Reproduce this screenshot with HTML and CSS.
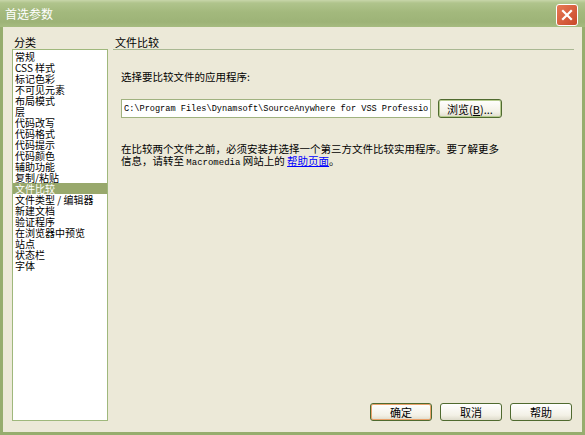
FILE: index.html
```html
<!DOCTYPE html>
<html lang="zh-CN">
<head>
    <meta charset="UTF-8">
    <title>首选参数</title>
    <link rel="stylesheet" href="styles.css">
</head>
<body>
    <div class="window">
        <div class="titlebar">
            <span class="title">首选参数</span>
            <button class="close" aria-label="关闭">
                <svg width="12" height="12" viewBox="0 0 12 12"><path d="M2 2 L10 10 M10 2 L2 10" stroke="#fff" stroke-width="2.2" stroke-linecap="square"/></svg>
            </button>
        </div>
        <div class="content">
            <div class="category">
                <div class="label">分类</div>
                <ul class="list">
                    <li>常规</li>
                    <li>CSS 样式</li>
                    <li>标记色彩</li>
                    <li>不可见元素</li>
                    <li>布局模式</li>
                    <li>层</li>
                    <li>代码改写</li>
                    <li>代码格式</li>
                    <li>代码提示</li>
                    <li>代码颜色</li>
                    <li>辅助功能</li>
                    <li>复制/粘贴</li>
                    <li class="selected">文件比较</li>
                    <li>文件类型 / 编辑器</li>
                    <li>新建文档</li>
                    <li>验证程序</li>
                    <li>在浏览器中预览</li>
                    <li>站点</li>
                    <li>状态栏</li>
                    <li>字体</li>
                </ul>
            </div>
            <div class="panel">
                <div class="panel-title">文件比较</div>
                <div class="panel-body">
                    <p class="prompt">选择要比较文件的应用程序:</p>
                    <div class="path-row">
                        <input class="path" type="text" value="C:\Program Files\Dynamsoft\SourceAnywhere for VSS Professional\SAWCompare.exe">
                        <button class="btn browse">浏览(<u>B</u>)...</button>
                    </div>
                    <p class="note">在比较两个文件之前，必须安装并选择一个第三方文件比较实用程序。要了解更多<br>信息，请转至 <span class="mono">Macromedia</span> 网站上的 <a href="#">帮助页面</a>。</p>
                </div>
                <div class="actions">
                    <button class="btn default">确定</button>
                    <button class="btn">取消</button>
                    <button class="btn">帮助</button>
                </div>
            </div>
        </div>
    </div>
</body>
</html>
```

FILE: styles.css
```css
body {
    margin: 0;
    padding: 0;
    font-family: "Noto Sans CJK SC", "DejaVu Sans", sans-serif;
    font-size: 11px;
    color: #000;
}
.window {
    width: 585px;
    height: 435px;
    display: flex;
    flex-direction: column;
    background: #96ad6e;
}
.titlebar {
    height: 27px;
    display: flex;
    align-items: center;
    justify-content: space-between;
    padding: 0 7px 0 5px;
    background: linear-gradient(#c8d6aa 0, #b0c48c 3px, #a3b97d 12px, #9db377 22px, #a6bb80 27px);
    box-sizing: border-box;
}
.title {
    color: #fff;
    font-size: 12px;
    line-height: 12px;
}
.close {
    width: 22px;
    height: 22px;
    padding: 0;
    margin-top: 2px;
    border: 1px solid #fff;
    border-radius: 3px;
    background: linear-gradient(135deg, #e77a55, #c9482a);
    display: flex;
    align-items: center;
    justify-content: center;
}
.content {
    flex: 1;
    margin: 0 3px 3px 3px;
    background: #ece9d8;
    display: grid;
    grid-template-columns: 96px 1fr;
    column-gap: 5px;
    padding: 9px 8px 11px 9px;
}
.category {
    display: flex;
    flex-direction: column;
}
.label {
    height: 13px;
    line-height: 12px;
    padding-left: 2px;
}
.list {
    flex: 1;
    margin: 0;
    padding: 1px 0 0 0;
    list-style: none;
    background: #fff;
    border: 1px solid #9fb87c;
}
.list li {
    height: 11px;
    line-height: 11px;
    padding-left: 2px;
    white-space: nowrap;
    font-size: 10px;
}
.list .selected {
    background: #98a86c;
    color: #fff;
}
.panel {
    display: flex;
    flex-direction: column;
}
.panel-title {
    height: 13px;
    line-height: 12px;
    padding-left: 2px;
    border-bottom: 1px solid #a9b892;
}
.panel-body {
    flex: 1;
    padding: 21px 0 0 8px;
}
.prompt {
    margin: 0;
    line-height: 12px;
    font-size: 10.5px;
}
.path-row {
    display: flex;
    gap: 7px;
    margin-top: 16px;
}
.path {
    width: 310px;
    height: 19px;
    box-sizing: border-box;
    border: 1px solid #a0b27f;
    padding: 0 2px;
    font-family: "Liberation Mono", monospace;
    font-size: 8.6px;
    background: #fff;
}
.btn {
    height: 18px;
    box-sizing: border-box;
    padding: 0;
    border: 1px solid #4f6a2f;
    border-radius: 3px;
    background: linear-gradient(#ffffff, #f3f1e6 70%, #dedbcb);
    font-family: inherit;
    font-size: 11px;
    line-height: 14px;
    color: #000;
}
.browse {
    width: 64px;
    height: 19px;
    box-shadow: inset 0 0 0 1px #b7cc8f;
}
.note {
    margin: 25px 0 0 0;
    line-height: 12px;
    font-size: 10.5px;
}
.note .mono {
    font-family: "Liberation Mono", monospace;
    font-size: 9px;
}
.note a {
    color: #0000ff;
}
.actions {
    display: flex;
    justify-content: flex-end;
    gap: 8px;
    padding-right: 2px;
}
.actions .btn {
    width: 62px;
}
.actions .default {
    box-shadow: inset 0 0 0 1px #e9a26a;
}
```
